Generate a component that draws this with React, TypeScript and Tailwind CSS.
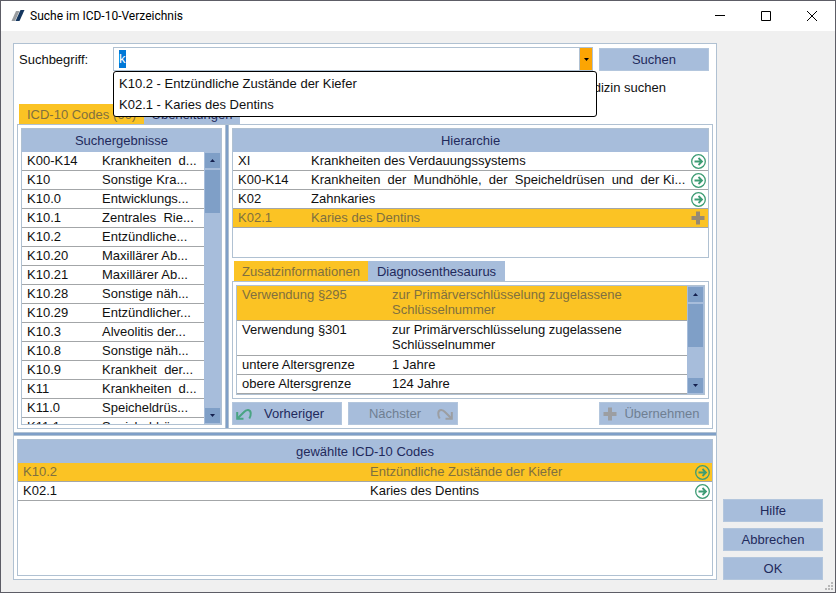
import { useEffect, useRef, type ReactNode } from "react";

const results: [string, string][] = [
  ["K00-K14", "Krankheiten  d..."],
  ["K10", "Sonstige Kra..."],
  ["K10.0", "Entwicklungs..."],
  ["K10.1", "Zentrales  Rie..."],
  ["K10.2", "Entzündliche..."],
  ["K10.20", "Maxillärer Ab..."],
  ["K10.21", "Maxillärer Ab..."],
  ["K10.28", "Sonstige näh..."],
  ["K10.29", "Entzündlicher..."],
  ["K10.3", "Alveolitis der..."],
  ["K10.8", "Sonstige näh..."],
  ["K10.9", "Krankheit  der..."],
  ["K11", "Krankheiten  d..."],
  ["K11.0", "Speicheldrüs..."],
  ["K11.1", "Speicheldrüs..."],
];

const hierarchy: [string, string][] = [
  ["XI", "Krankheiten des Verdauungssystems"],
  ["K00-K14", "Krankheiten  der  Mundhöhle,  der  Speicheldrüsen  und  der Ki..."],
  ["K02", "Zahnkaries"],
  ["K02.1", "Karies des Dentins"],
];

const details: [string, string][] = [
  ["Verwendung §295", "zur Primärverschlüsselung zugelassene Schlüsselnummer"],
  ["Verwendung §301", "zur Primärverschlüsselung zugelassene Schlüsselnummer"],
  ["untere Altersgrenze", "1 Jahre"],
  ["obere Altersgrenze", "124 Jahre"],
];

const chosen: [string, string][] = [
  ["K10.2", "Entzündliche Zustände der Kiefer"],
  ["K02.1", "Karies des Dentins"],
];

function LogoIcon() {
  return (
    <svg width="14" height="12" viewBox="0 0 14 12" aria-hidden="true">
      <path d="M5 1h3.500L4 11H0.500z" fill="#9a9da0" />
      <path d="M9.500 0h4L8.500 11H4.500z" fill="#14365f" />
    </svg>
  );
}

function ArrowCircle() {
  return (
    <svg width="15" height="15" viewBox="0 0 15 15" fill="none" stroke="#3d9c74" aria-hidden="true">
      <circle cx="7.500" cy="7.500" r="6.800" strokeWidth="1.300" />
      <path d="M3.500 7.500h7M7.500 4l3.500 3.500L7.500 11" strokeWidth="1.800" />
    </svg>
  );
}

function Plus({ className }: { className: string }) {
  return (
    <svg width="14" height="14" viewBox="0 0 14 14" className={className} aria-hidden="true">
      <path d="M5 0.500h4v4.500h4.500v4H9v4.500H5V9H0.500V5H5z" fill="currentColor" />
    </svg>
  );
}

function CurvedArrow({ className }: { className: string }) {
  return (
    <svg width="16" height="14" viewBox="0 0 16 14" fill="none" stroke="currentColor" className={className} aria-hidden="true">
      <path d="M1.500 11.500L7.500 5.500C9.500 3.300 11 2.800 12.200 3 15.500 3.600 15.300 8 13.300 11.500" strokeWidth="2" />
      <path d="M1.200 5v6.800h6.300" strokeWidth="2" />
    </svg>
  );
}

function Caret({ up = false }: { up?: boolean }) {
  return (
    <svg width="5" height="3" viewBox="0 0 5 3" aria-hidden="true">
      <path d={up ? "M0 3h5L2.500 0z" : "M0 0h5L2.500 3z"} fill="currentColor" />
    </svg>
  );
}

function Scrollbar() {
  const end = "flex h-[15px] shrink-0 items-center justify-center bg-[#7f9fc7] text-[#14204e]";
  return (
    <div className="flex w-[17px] shrink-0 flex-col bg-[#a7bddb] p-px">
      <button type="button" aria-label="Nach oben" className={end}>
        <Caret up />
      </button>
      <div className="flex-1 pt-[2px]">
        <div className="h-[43px] bg-[#7f9fc7]" />
      </div>
      <button type="button" aria-label="Nach unten" className={end}>
        <Caret />
      </button>
    </div>
  );
}

function PanelTitle({ id, children }: { id: string; children: ReactNode }) {
  return (
    <h2 id={id} className="h-[23px] shrink-0 bg-[#a7bddb] text-center leading-6 text-[#1f2a5c]">
      {children}
    </h2>
  );
}

function PushButton({ children, className = "w-[110px]", disabled = false }: { children: ReactNode; className?: string; disabled?: boolean }) {
  return (
    <button
      type="button"
      disabled={disabled}
      className={`flex h-[23px] shrink-0 items-center justify-center border border-[#b3c6dd] bg-[#a7bddb] text-[#1f2a5c] disabled:text-[#6f7f92] ${className}`}
    >
      {children}
    </button>
  );
}

const rowLine = "border-b border-[#a3a6a8]";
const selected = "bg-[#fbc324] text-[#80703f]";
const activeTab = "h-5 bg-[#fbc324] pt-[2px] text-center text-[#80703f]";
const idleTab = "h-5 bg-[#a7bddb] pt-[2px] text-center text-[#1f2a5c]";

export default function App() {
  const search = useRef<HTMLInputElement>(null);
  useEffect(() => {
    search.current?.focus();
    search.current?.select();
  }, []);

  return (
    <div className="flex min-h-screen flex-col border border-[#5d5d66] bg-[#f0f0f0] font-['Liberation_Sans',Arial,sans-serif] text-[13px] leading-[18px] text-[#101010]">
      <header className="flex h-[30px] shrink-0 items-center bg-white pl-[10px] text-black">
        <LogoIcon />
        <h1 className="ml-[5px] flex-1 font-['Roboto','Noto_Sans',sans-serif] text-[12px]">Suche im ICD-10-Verzeichnis</h1>
        <button type="button" aria-label="Minimieren" className="flex h-full w-[46px] items-center justify-center">
          <svg width="10" height="10" viewBox="0 0 10 10" stroke="currentColor"><path d="M0 4.500h10" /></svg>
        </button>
        <button type="button" aria-label="Maximieren" className="flex h-full w-[46px] items-center justify-center">
          <svg width="10" height="10" viewBox="0 0 10 10" fill="none" stroke="currentColor"><path d="M0.500 0.500h9v9h-9z" /></svg>
        </button>
        <button type="button" aria-label="Schließen" className="flex h-full w-[46px] items-center justify-center">
          <svg width="10" height="10" viewBox="0 0 10 10" stroke="currentColor"><path d="M0 0l10 10M10 0L0 10" /></svg>
        </button>
      </header>

      <div className="flex flex-1 gap-[6px] px-3 py-3">
        <main className="flex min-w-0 flex-1 flex-col border border-[#b0c1d2] bg-white p-[3px]">
          <div className="flex pr-1 pl-[2px]">
            <label htmlFor="term" className="w-[94px] shrink-0 pt-1">Suchbegriff:</label>
            <div className="relative flex h-6 flex-1 border border-[#b0c1d2]">
              <input
                id="term"
                ref={search}
                defaultValue="k"
                className="min-w-0 flex-1 pl-[5px] caret-transparent outline-none selection:bg-[#0078d7] selection:text-white"
              />
              <button type="button" aria-label="Vorschläge" className="flex w-[13px] items-center justify-center border-l border-[#b0c1d2] bg-[#fca503] text-black">
                <Caret />
              </button>
              <ul className="absolute top-[23px] -right-[5px] -left-px z-10 rounded-[3px] border border-black bg-white py-px pl-[5px] leading-[21px]">
                {chosen.map(([code, text]) => (
                  <li key={code}>{code} - {text}</li>
                ))}
              </ul>
            </div>
            <div className="ml-[6px] pt-px">
              <PushButton>Suchen</PushButton>
            </div>
          </div>

          <p className="h-[33px] pr-[47px] text-right leading-[33px]">Nur in der Zahnmedizin suchen</p>

          <div className="flex pl-[2px]" role="tablist">
            <button type="button" role="tab" aria-selected="true" className={`${activeTab} w-[125px]`}>ICD-10 Codes (66)</button>
            <button type="button" role="tab" aria-selected="false" className={`${idleTab} w-24`}>Überleitungen</button>
          </div>

          <div className="flex border border-[#b0c1d2] p-[3px]">
            <section className="flex w-[201px] shrink-0 flex-col border border-[#b0c1d2]">
              <PanelTitle id="results">Suchergebnisse</PanelTitle>
              <div className="flex h-[272px]">
                <div className="min-w-0 flex-1 overflow-hidden">
                  <table aria-labelledby="results" className="w-full table-fixed">
                    <tbody>
                      {results.map(([code, text]) => (
                        <tr key={code} className={rowLine}>
                          <td className="w-20 pl-[5px]">{code}</td>
                          <td className="whitespace-pre">{text}</td>
                        </tr>
                      ))}
                    </tbody>
                  </table>
                </div>
                <Scrollbar />
              </div>
            </section>

            <div className="-my-[3px] mx-[3px] w-1 shrink-0 border-x border-[#b0c1d2] bg-[#7f9fc7]" />

            <div className="flex min-w-0 flex-1 flex-col">
              <section className="min-h-[130px] border border-[#b0c1d2]">
                <PanelTitle id="hierarchy">Hierarchie</PanelTitle>
                <table aria-labelledby="hierarchy" className="w-full table-fixed">
                  <tbody>
                    {hierarchy.map(([code, text], i) => (
                      <tr key={code} className={i === 3 ? `${rowLine} ${selected}` : rowLine}>
                        <td className="w-[78px] pl-[5px]">{code}</td>
                        <td className="overflow-hidden whitespace-pre">{text}</td>
                        <td className="w-[17px]">
                          <button type="button" aria-label={i === 3 ? "Hinzufügen" : "Öffnen"} className="block">
                            {i === 3 ? <Plus className="text-[#978a72]" /> : <ArrowCircle />}
                          </button>
                        </td>
                      </tr>
                    ))}
                  </tbody>
                </table>
              </section>

              <div className="mt-[3px] flex pl-[2px]" role="tablist">
                <button type="button" role="tab" aria-selected="true" className={`${activeTab} w-[134px]`}>Zusatzinformationen</button>
                <button type="button" role="tab" aria-selected="false" className={`${idleTab} w-[137px]`}>Diagnosenthesaurus</button>
              </div>
              <div className="border border-[#b0c1d2] p-[3px]">
                <div className="flex h-[110px] border border-[#b0c1d2]">
                  <div className="min-w-0 flex-1 overflow-hidden">
                    <table aria-label="Zusatzinformationen" className="w-full table-fixed">
                      <tbody>
                        {details.map(([name, value], i) => (
                          <tr key={name} className={i === 0 ? `${rowLine} ${selected}` : rowLine}>
                            <td className="w-[155px] pl-[5px] align-top">{name}</td>
                            <td className={i < 2 ? "pt-px pb-[3px] pr-12 leading-[15px]" : "pr-12"}>{value}</td>
                          </tr>
                        ))}
                      </tbody>
                    </table>
                  </div>
                  <Scrollbar />
                </div>
              </div>

              <div className="mt-[3px] flex gap-[6px]">
                <PushButton className="w-[110px] gap-3 pr-[14px]">
                  <CurvedArrow className="text-[#4aa483]" />
                  Vorheriger
                </PushButton>
                <PushButton className="w-[110px] gap-4 pl-4" disabled>
                  Nächster
                  <CurvedArrow className="-scale-x-100 text-[#9c9ea2]" />
                </PushButton>
                <PushButton className="ml-auto w-[110px] gap-[7px] pr-[5px]" disabled>
                  <Plus className="text-[#9c9ea2]" />
                  Übernehmen
                </PushButton>
              </div>
            </div>
          </div>

          <div className="-mx-[3px] my-[3px] h-1 shrink-0 border-y border-[#b0c1d2] bg-[#7f9fc7]" />

          <section className="flex-1 border border-[#b0c1d2]">
            <PanelTitle id="chosen">gewählte ICD-10 Codes</PanelTitle>
            <table aria-labelledby="chosen" className="w-full table-fixed">
              <tbody>
                {chosen.map(([code, text], i) => (
                  <tr key={code} className={i === 0 ? `${rowLine} ${selected}` : rowLine}>
                    <td className="w-1/2 pl-[5px]">{code}</td>
                    <td className="pl-[5px]">{text}</td>
                    <td className="w-[17px]">
                      <button type="button" aria-label="Öffnen" className="block">
                        <ArrowCircle />
                      </button>
                    </td>
                  </tr>
                ))}
              </tbody>
            </table>
          </section>
        </main>

        <aside className="flex w-[100px] shrink-0 flex-col justify-end gap-[6px]">
          <PushButton className="w-full">Hilfe</PushButton>
          <PushButton className="w-full">Abbrechen</PushButton>
          <PushButton className="w-full">OK</PushButton>
        </aside>
      </div>

      <svg className="absolute right-[3px] bottom-[3px]" width="8" height="8" viewBox="0 0 8 8" fill="#b8b8b8" aria-hidden="true">
        <path d="M6 0h2v2H6zM3 3h2v2H3zM6 3h2v2H6zM0 6h2v2H0zM3 6h2v2H3zM6 6h2v2H6z" />
      </svg>
    </div>
  );
}
